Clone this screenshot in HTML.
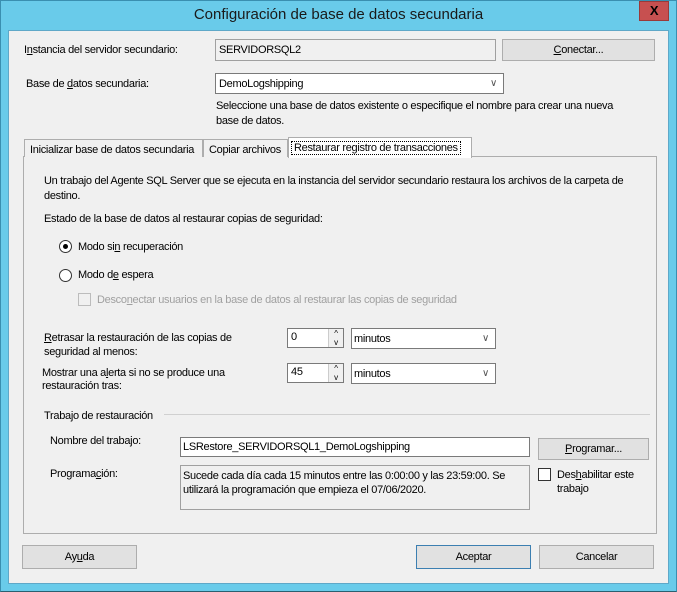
<!DOCTYPE html>
<html><head><meta charset="utf-8"><style>
*{margin:0;padding:0;box-sizing:border-box}
body{width:677px;height:592px;overflow:hidden;background:#69cbea;font-family:"Liberation Sans",sans-serif;font-size:11px;letter-spacing:-0.3px;color:#000;position:relative}
.a{position:absolute;white-space:nowrap}
.frame{position:absolute;left:0;top:0;width:677px;height:592px;border:1px solid #3a8fb0;border-bottom-color:#2a6070}
.client{position:absolute;left:8px;top:30px;width:661px;height:554px;background:#f0f0f0;border:1px solid #5fa8c8}
.title{position:absolute;left:0;top:6px;width:677px;text-align:center;font-size:15px;letter-spacing:0;color:#1a1a1a}
.close{position:absolute;left:639px;top:1px;width:30px;height:20px;background:#c75050;border:1px solid #9a3a3a;color:#000;font-weight:bold;font-size:13px;text-align:center;line-height:17px}
.tb{position:absolute;border:1px solid #a0a0a0;background:#f0f0f0;padding:4px 0 0 3px;white-space:nowrap}
.white{background:#fff;border-color:#7a7a7a}
.btn{position:absolute;border:1px solid #adadad;background:#e1e1e1;text-align:center;line-height:20px}
.u{text-decoration:underline}
.dd{position:absolute;font-size:10px;color:#555}
.gray{color:#a0a0a0}
</style></head><body>
<div class="frame"></div>
<div class="title">Configuración de base de datos secundaria</div>
<div class="close">X</div>
<div class="client"></div>

<div class="a" style="left:24px;top:44px">I<span class="u">n</span>stancia del servidor secundario:</div>
<div class="tb" style="left:215px;top:39px;width:281px;height:22px">SERVIDORSQL2</div>
<div class="btn" style="left:502px;top:39px;width:153px;height:22px"><span class="u">C</span>onectar...</div>

<div class="a" style="left:26px;top:78px">Base de <span class="u">d</span>atos secundaria:</div>
<div class="tb white" style="left:215px;top:73px;width:289px;height:21px">DemoLogshipping</div>
<div class="dd" style="left:490px;top:78px">&#8744;</div>
<div class="a" style="left:216px;top:99px;line-height:15px">Seleccione una base de datos existente o especifique el nombre para crear una nueva<br>base de datos.</div>

<div style="position:absolute;left:23px;top:156px;width:634px;height:378px;border:1px solid #adadad;background:#f0f0f0"></div>
<div class="a" style="left:24px;top:139px;width:179px;height:18px;border:1px solid #adadad;border-bottom:none;padding:4px 0 0 5px;background:#f0f0f0">Inicializar base de datos secundaria</div>
<div class="a" style="left:203px;top:139px;width:85px;height:18px;border:1px solid #adadad;border-bottom:none;padding:4px 0 0 5px;background:#f0f0f0">Copiar archivos</div>
<div class="a" style="left:288px;top:137px;width:184px;height:21px;border:1px solid #adadad;border-bottom:none;background:#fff;padding:4px 0 0 3px"><span style="outline:1px dotted #000;padding:0 2px">Restaurar registro de transacciones</span></div>

<div class="a" style="left:44px;top:174px;line-height:15px">Un trabajo del Agente SQL Server que se ejecuta en la instancia del servidor secundario restaura los archivos de la carpeta de<br>destino.</div>
<div class="a" style="left:44px;top:213px">Estado de la base de datos al restaurar copias de seguridad:</div>
<div class="a" style="left:59px;top:240px;width:13px;height:13px;border:1px solid #333;border-radius:50%;background:#fff"><div style="position:absolute;left:3px;top:3px;width:5px;height:5px;border-radius:50%;background:#000"></div></div>
<div class="a" style="left:78px;top:241px">Modo si<span class="u">n</span> recuperación</div>
<div class="a" style="left:59px;top:269px;width:13px;height:13px;border:1px solid #333;border-radius:50%;background:#fff"></div>
<div class="a" style="left:78px;top:269px">Modo d<span class="u">e</span> espera</div>
<div class="a" style="left:78px;top:293px;width:13px;height:13px;border:1px solid #bcbcbc;background:#f0f0f0"></div>
<div class="a gray" style="left:97px;top:294px">Desco<span class="u">n</span>ectar usuarios en la base de datos al restaurar las copias de seguridad</div>

<div class="a" style="left:44px;top:331px;line-height:14px"><span class="u">R</span>etrasar la restauración de las copias de<br>seguridad al menos:</div>
<div class="tb white" style="left:287px;top:328px;width:57px;height:20px;padding:2px 0 0 3px">0</div>
<div class="a" style="left:328px;top:329px;width:15px;height:18px;border-left:1px solid #ccc;background:#f0f0f0;font-size:8px;text-align:center;line-height:9px">^<br>v</div>
<div class="tb white" style="left:351px;top:328px;width:145px;height:21px;padding:4px 0 0 2px">minutos</div>
<div class="dd" style="left:482px;top:333px">&#8744;</div>

<div class="a" style="left:42px;top:367px;line-height:13px">Mostrar una a<span class="u">l</span>erta si no se produce una<br>restauración tras:</div>
<div class="tb white" style="left:287px;top:363px;width:57px;height:20px;padding:2px 0 0 3px">45</div>
<div class="a" style="left:328px;top:364px;width:15px;height:18px;border-left:1px solid #ccc;background:#f0f0f0;font-size:8px;text-align:center;line-height:9px">^<br>v</div>
<div class="tb white" style="left:351px;top:363px;width:145px;height:21px;padding:4px 0 0 2px">minutos</div>
<div class="dd" style="left:482px;top:368px">&#8744;</div>

<div class="a" style="left:44px;top:410px">Trabajo de restauración</div>
<div class="a" style="left:164px;top:414px;width:486px;height:1px;background:#d0d0d0"></div>

<div class="a" style="left:50px;top:435px">Nombre del trabajo:</div>
<div class="tb white" style="left:180px;top:437px;width:350px;height:20px;padding:3px 0 0 2px">LSRestore_SERVIDORSQL1_DemoLogshipping</div>
<div class="btn" style="left:538px;top:438px;width:111px;height:22px"><span class="u">P</span>rogramar...</div>
<div class="a" style="left:50px;top:468px">Programa<span class="u">c</span>ión:</div>
<div class="tb" style="left:180px;top:465px;width:350px;height:45px;line-height:14px;padding:3px 0 0 2px">Sucede cada día cada 15 minutos entre las 0:00:00 y las 23:59:00. Se<br>utilizará la programación que empieza el 07/06/2020.</div>
<div class="a" style="left:538px;top:468px;width:13px;height:13px;border:1px solid #333;background:#fff"></div>
<div class="a" style="left:557px;top:468px;line-height:14px">Des<span class="u">h</span>abilitar este<br>trabajo</div>

<div class="btn" style="left:22px;top:545px;width:115px;height:24px;line-height:22px">Ay<span class="u">u</span>da</div>
<div class="btn" style="left:416px;top:545px;width:115px;height:24px;line-height:22px;border-color:#3c7fb1">Aceptar</div>
<div class="btn" style="left:539px;top:545px;width:115px;height:24px;line-height:22px">Cancelar</div>
</body></html>
